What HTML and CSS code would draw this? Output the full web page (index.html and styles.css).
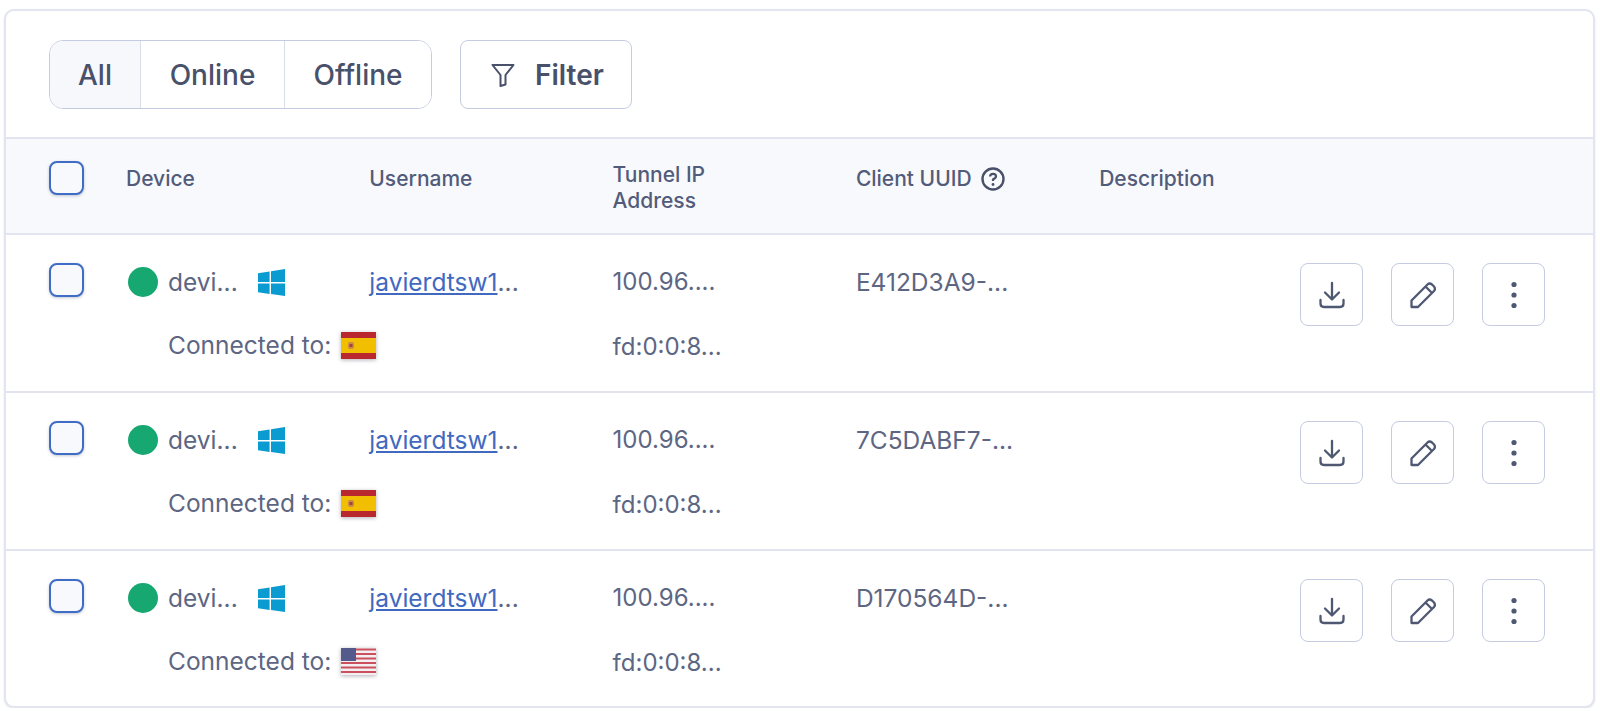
FILE: index.html
```html
<!DOCTYPE html>
<html>
<head>
<meta charset="utf-8">
<title>Devices</title>
<link rel="stylesheet" href="styles.css">
</head>
<body>
<svg class="defs" width="0" height="0">
  <symbol id="win" viewBox="0 0 27 27">
    <path d="M0 4.2 11.6 2.5V13H0ZM13 2.3 27 0V13H13ZM0 14.4H11.6V25L0 23.2ZM13 14.4H27V27L13 24.9Z"/>
  </symbol>
  <symbol id="es" viewBox="0 0 35 27">
    <rect width="35" height="27" fill="#b8282e"/>
    <rect y="6" width="35" height="15" fill="#f1bf00"/>
    <rect x="7" y="10" width="6" height="7" rx="2" fill="#c98a4a"/>
    <rect x="8.5" y="12" width="3" height="3" fill="#a8423a"/>
  </symbol>
  <symbol id="us" viewBox="0 0 35 27">
    <rect width="35" height="27" fill="#f4eef0"/>
    <path d="M0 1.5H35M0 6H35M0 10.5H35M0 15H35M0 19.5H35M0 24H35" stroke="#c9505c" stroke-width="2.2"/>
    <rect width="15" height="13" fill="#555a8c"/>
  </symbol>
  <symbol id="dl" viewBox="0 0 28 28">
    <path d="M14 2V18M7 11.5 14 18.5 21 11.5M2.5 19V22.5Q2.5 26 6 26H22Q25.5 26 25.5 22.5V19" fill="none" stroke="currentColor" stroke-width="2.3" stroke-linecap="round" stroke-linejoin="round"/>
  </symbol>
  <symbol id="pen" viewBox="0 0 28 28">
    <path d="M2.5 19.5 18.5 3.5Q20.5 1.5 23 3.5L25 5.5Q26.8 8 25 10L9 26H2.5ZM16.5 5.5 23 12" fill="none" stroke="currentColor" stroke-width="2.3" stroke-linejoin="round"/>
  </symbol>
  <symbol id="dots" viewBox="0 0 28 28">
    <circle cx="14" cy="3.5" r="2.6" fill="currentColor"/>
    <circle cx="14" cy="14" r="2.6" fill="currentColor"/>
    <circle cx="14" cy="24.5" r="2.6" fill="currentColor"/>
  </symbol>
</svg>

<div class="card">
  <div class="toolbar">
    <div class="seg">
      <button class="seg-item active">All</button>
      <button class="seg-item online">Online</button>
      <button class="seg-item offline">Offline</button>
    </div>
    <button class="filter">
      <svg class="filter-icon" viewBox="0 0 24 24"><path d="M1.5 2H22.5L14.5 12V21.5L9.5 23V12Z" fill="none" stroke="currentColor" stroke-width="2" stroke-linejoin="round"/></svg>
      Filter
    </button>
  </div>

  <div class="row head">
    <div class="col-check"><span class="check"></span></div>
    <div class="col up">Device</div>
    <div class="col up">Username</div>
    <div class="col two">Tunnel IP<br>Address</div>
    <div class="col up uuid-head">Client UUID
      <svg class="help" viewBox="0 0 24 24"><circle cx="12" cy="12" r="10.5" fill="none" stroke="currentColor" stroke-width="2.4"/><path d="M9 9.5Q9.3 6.8 12 6.8 15 6.8 15 9.3 15 11 12 12.5V14" fill="none" stroke="currentColor" stroke-width="2.2"/><circle cx="12" cy="17.5" r="1.4" fill="currentColor"/></svg>
    </div>
    <div class="col up">Description</div>
  </div>

  <div class="row item">
    <div class="col-check"><span class="check"></span></div>
    <div class="col cell">
      <div class="line device"><span class="dot"></span><span class="name">devi...</span><svg class="win"><use href="#win"/></svg></div>
      <div class="line conn">Connected to: <svg class="flag"><use href="#es"/></svg></div>
    </div>
    <div class="col cell"><div class="line"><a class="user" href="#">javierdtsw1</a>...</div></div>
    <div class="col cell ips"><div class="line">100.96....</div><div class="line ip6">fd:0:0:8...</div></div>
    <div class="col cell"><div class="line">E412D3A9-...</div></div>
    <div class="col desc"></div>
    <div class="actions">
      <button class="act"><svg><use href="#dl"/></svg></button>
      <button class="act"><svg><use href="#pen"/></svg></button>
      <button class="act"><svg><use href="#dots"/></svg></button>
    </div>
  </div>

  <div class="row item">
    <div class="col-check"><span class="check"></span></div>
    <div class="col cell">
      <div class="line device"><span class="dot"></span><span class="name">devi...</span><svg class="win"><use href="#win"/></svg></div>
      <div class="line conn">Connected to: <svg class="flag"><use href="#es"/></svg></div>
    </div>
    <div class="col cell"><div class="line"><a class="user" href="#">javierdtsw1</a>...</div></div>
    <div class="col cell ips"><div class="line">100.96....</div><div class="line ip6">fd:0:0:8...</div></div>
    <div class="col cell"><div class="line">7C5DABF7-...</div></div>
    <div class="col desc"></div>
    <div class="actions">
      <button class="act"><svg><use href="#dl"/></svg></button>
      <button class="act"><svg><use href="#pen"/></svg></button>
      <button class="act"><svg><use href="#dots"/></svg></button>
    </div>
  </div>

  <div class="row item last">
    <div class="col-check"><span class="check"></span></div>
    <div class="col cell">
      <div class="line device"><span class="dot"></span><span class="name">devi...</span><svg class="win"><use href="#win"/></svg></div>
      <div class="line conn">Connected to: <svg class="flag"><use href="#us"/></svg></div>
    </div>
    <div class="col cell"><div class="line"><a class="user" href="#">javierdtsw1</a>...</div></div>
    <div class="col cell ips"><div class="line">100.96....</div><div class="line ip6">fd:0:0:8...</div></div>
    <div class="col cell"><div class="line">D170564D-...</div></div>
    <div class="col desc"></div>
    <div class="actions">
      <button class="act"><svg><use href="#dl"/></svg></button>
      <button class="act"><svg><use href="#pen"/></svg></button>
      <button class="act"><svg><use href="#dots"/></svg></button>
    </div>
  </div>
</div>
</body>
</html>
```

FILE: styles.css
```css
html, body { margin: 0; background: #fff; }
body { padding: 9px 5px 0 4px; font-family: Inter, "Liberation Sans", sans-serif; color: #525c7a; overflow: hidden; }
.defs { position: absolute; }

.card { border: 2px solid #e2e5ef; border-radius: 10px; background: #fff; box-shadow: 0 1px 2px rgba(80, 90, 130, 0.15); box-sizing: border-box; height: 699px; overflow: hidden; }

.toolbar { display: flex; gap: 28px; padding: 29px 0 28px 43px; }
.seg { display: flex; height: 69px; box-sizing: border-box; border: 1.5px solid #c5cbe0; border-radius: 14px; overflow: hidden; }
.seg-item { border: 0; border-right: 1.5px solid #d9ddea; background: #fff; font: 500 28px Inter, sans-serif; color: #48506a; padding: 0; }
.seg-item.active { width: 91px; background: #f7f8fb; }
.seg-item.online { width: 144px; }
.seg-item.offline { width: 146px; border-right: 0; }
.filter { display: flex; align-items: center; gap: 20px; width: 172px; height: 69px; box-sizing: border-box; border: 1.5px solid #c5cbe0; border-radius: 8px; background: #fff; font: 600 28px Inter, sans-serif; color: #48506a; padding: 0 0 0 30px; }
.filter-icon { width: 24px; height: 24px; }

.row { display: flex; }
.col-check { width: 35px; flex: none; padding: 0 42px 0 43px; }
.col { width: 243.3px; flex: none; box-sizing: border-box; padding-right: 20px; }

.check { display: block; width: 35px; height: 34px; box-sizing: border-box; border: 2px solid #3f6cc4; border-radius: 8px; background: #f8f9fc; box-shadow: 0 1px 3px rgba(60, 70, 110, 0.3); }

.head { height: 98px; box-sizing: border-box; align-items: center; background: #f8f9fc; border-top: 2px solid #e2e5ef; border-bottom: 2px solid #e2e5ef; font-size: 21px; font-weight: 500; line-height: 26px; color: #525c7a; }
.head .up { padding-bottom: 14px; }
.head .two { padding-top: 3px; }
.head .col-check { padding-bottom: 17px; }
.uuid-head { display: flex; align-items: center; gap: 9px; }
.help { width: 24px; height: 24px; color: #48506a; }

.item { position: relative; height: 158px; box-sizing: border-box; padding-top: 28px; border-bottom: 2px solid #e2e5ef; font-size: 24.5px; color: #5d6682; }
.item.last { border-bottom: 0; }
.cell { padding-top: 3px; }
.ips { font-size: 24px; }
.line { height: 32px; line-height: 32px; white-space: nowrap; }
.ip6 { margin-top: 33px; }
.device { display: flex; align-items: center; margin-left: 2px; }
.dot { width: 30px; height: 30px; border-radius: 50%; background: #16a870; flex: none; }
.name { margin-left: 10px; }
.win { width: 27px; height: 27px; margin-left: 20px; fill: #0a9bd0; flex: none; }
.conn { display: flex; align-items: center; gap: 10px; margin: 31px 0 0 42px; }
.flag { width: 35px; height: 27px; flex: none; box-shadow: 0 1px 4px rgba(60, 60, 80, 0.4); }
.user { color: #4169c0; text-decoration: underline; }

.actions { position: absolute; top: 28px; left: 1294px; display: flex; gap: 28px; }
.act { width: 63px; height: 63px; padding: 0; box-sizing: border-box; border: 1.5px solid #c5cbe0; border-radius: 8px; background: #fff; color: #4f5873; display: flex; align-items: center; justify-content: center; }
.act svg { width: 28px; height: 28px; }
```
